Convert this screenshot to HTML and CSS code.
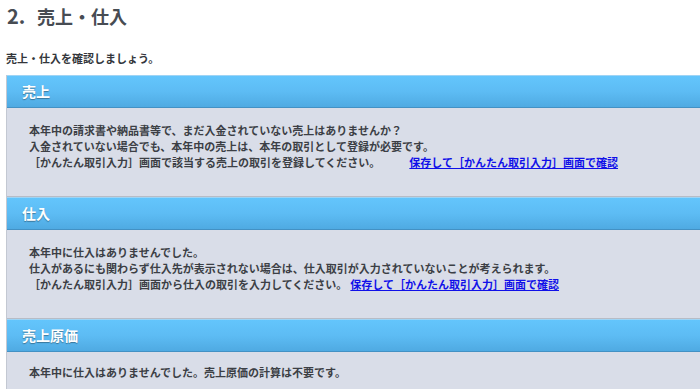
FILE: index.html
```html
<!DOCTYPE html>
<html lang="ja">
<head>
    <meta charset="UTF-8">
    <meta name="viewport" content="width=device-width, initial-scale=1.0">
    <title>売上・仕入</title>
    <link rel="stylesheet" href="styles.css">
</head>
<body>
    <div class="page">
        <h1 class="title"><span class="num">2.</span>売上・仕入</h1>
        <p class="lead">売上・仕入を確認しましょう。</p>

        <div class="section">
            <div class="section-head">売上</div>
            <div class="section-body">
                <p>本年中の請求書や納品書等で、まだ入金されていない売上はありませんか？</p>
                <p>入金されていない場合でも、本年中の売上は、本年の取引として登録が必要です。</p>
                <p>［かんたん取引入力］画面で該当する売上の取引を登録してください。<a href="#" class="link link-wide">保存して［かんたん取引入力］画面で確認</a></p>
            </div>
        </div>

        <div class="section">
            <div class="section-head">仕入</div>
            <div class="section-body">
                <p>本年中に仕入はありませんでした。</p>
                <p>仕入があるにも関わらず仕入先が表示されない場合は、仕入取引が入力されていないことが考えられます。</p>
                <p>［かんたん取引入力］画面から仕入の取引を入力してください。<a href="#" class="link">保存して［かんたん取引入力］画面で確認</a></p>
            </div>
        </div>

        <div class="section">
            <div class="section-head">売上原価</div>
            <div class="section-body short">
                <p>本年中に仕入はありませんでした。売上原価の計算は不要です。</p>
            </div>
        </div>
    </div>
</body>
</html>
```

FILE: styles.css
```css
body {
    margin: 0;
    font-family: "Noto Sans CJK JP", "Noto Sans", sans-serif;
    background-color: #fff;
    color: #3a3d42;
    overflow: hidden;
}

.page {
    padding: 2px 0 0 6px;
}

.title {
    margin: 0 0 0 1px;
    font-size: 18px;
    line-height: 28px;
    font-weight: bold;
    color: #474c53;
}

.title .num {
    display: inline-block;
    width: 30px;
    font-size: 20px;
}

.lead {
    margin: 20px 0 9px;
    font-size: 11px;
    line-height: 16px;
    font-weight: bold;
    color: #33363b;
}

.section {
    margin-right: -30px;
    border-left: 1px solid #c3c8d2;
    background-color: #d9dde8;
}

.section-head {
    height: 31px;
    line-height: 31px;
    padding-left: 15px;
    border-top: 1px solid #9ed4f5;
    border-bottom: 1px solid #4391c4;
    background: linear-gradient(to bottom, #63c5fc 0%, #5dbcf4 50%, #4faae2 100%);
    color: #fff;
    font-size: 14px;
    font-weight: bold;
    text-shadow: 0 1px 1px rgba(0, 0, 0, 0.35);
}

.section-body {
    padding: 14px 22px 26px;
    border-bottom: 1px solid #b7bcc6;
}

.section-body.short {
    padding-top: 12px;
}

.section-body p {
    margin: 0;
    font-size: 11px;
    line-height: 16px;
    font-weight: bold;
    color: #3c3f45;
}

.link {
    margin-left: 3px;
    color: #1010e8;
    text-decoration: underline;
}

.link-wide {
    margin-left: 29px;
}
```
